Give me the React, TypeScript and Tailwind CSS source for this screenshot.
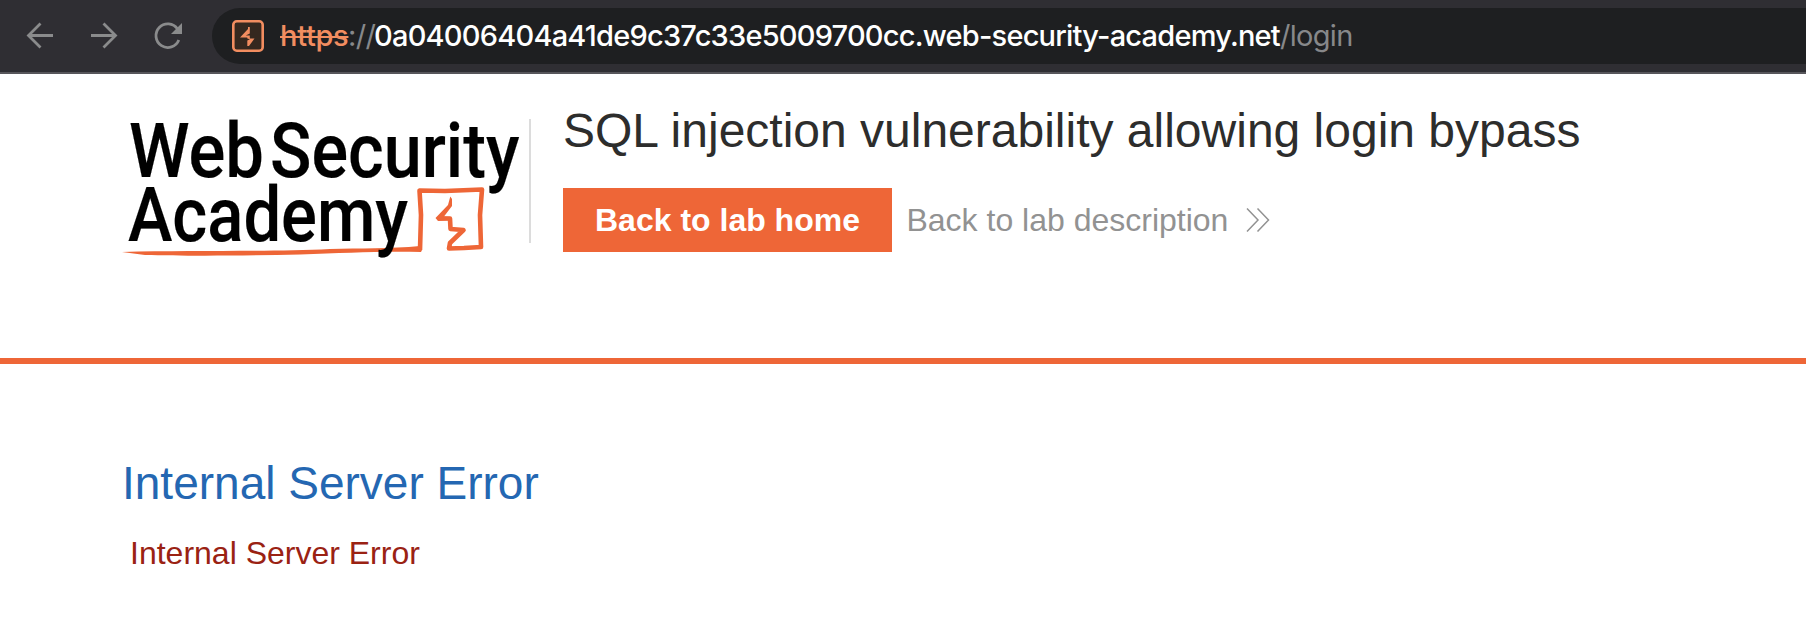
import React from "react";

function Toolbar() {
  return (
    <div className="flex h-[74px] items-start border-b-2 border-[#57565b] bg-[#2f2e33]">
      <svg className="h-[72px] w-[212px] shrink-0" viewBox="0 0 212 72" fill="none" stroke="#8a8b8c" strokeWidth="2.8">
        <path d="M53 35.5H28.5M40.5 23.5L28.5 35.5L40.5 47.5" />
        <path d="M91 35.5H115.5M103.5 23.5L115.5 35.5L103.5 47.5" />
        <path d="M177.5 29A11.8 11.8 0 1 0 178.8 40" />
        <path d="M182 23V34H171Z" fill="#8a8b8c" stroke="none" />
      </svg>
      <div className="mt-2 flex h-14 flex-1 items-center rounded-l-full bg-[#1e1f21] pl-5">
        <svg className="h-8 w-8 shrink-0" viewBox="0 0 32 32">
          <rect x="1.3" y="1.3" width="29.4" height="29.4" rx="3.5" fill="#35281f" stroke="#f28d60" strokeWidth="2.6" />
          <path d="M16 7H17.8V13.5L13.8 15.6H17.8V18.4H22.5L17 26H15.3V20.5L18 19.2L15.3 18.6V17.5H8L16 9Z" fill="#f28d60" />
        </svg>
        <div className="ml-4 flex whitespace-nowrap font-['Inter',sans-serif] text-[29px] leading-[36px]">
          <span className="w-[68px] font-medium tracking-[-0.3px] text-[#f28d60] line-through decoration-2">https</span>
          <span className="w-[26px] tracking-[-0.6px] text-[#87888a]">://</span>
          <span className="w-[906px] font-medium tracking-[-0.78px] text-white">0a04006404a41de9c37c33e5009700cc.web-security-academy.net</span>
          <span className="tracking-[-0.7px] text-[#87888a]">/login</span>
        </div>
      </div>
    </div>
  );
}

function Logo() {
  return (
    <svg className="h-[170px] w-[407px] shrink-0 overflow-visible" viewBox="122 100 407 170" fontFamily="Roboto, sans-serif" fontWeight="500" fontSize="75.5">
      <path d="M122 252C190 250 270 252 330 249C360 248 390 249 420 246L422 250L421 252C380 251 345 253 300 254.5C240 256 180 256 145 255Z" fill="#ee6637" />
      <path d="M420 250L421 215L419.5 190.5L445 191L482 189.5L480 215L481 247L464 248L449 248.5L450 243L463.5 230L450.5 229L450 218.5H439" fill="none" stroke="#ee6637" strokeWidth="4.6" strokeLinejoin="round" />
      <path d="M450.3 196.5L452 199V206L444 216.5L451 217V220L438 221L435.5 218L448 205Z" fill="#ee6637" />
      <g stroke="#000" strokeWidth="0.2">
        <text x="129" y="176.5" textLength="135" lengthAdjust="spacingAndGlyphs">Web</text>
        <text x="270" y="176.5" textLength="249.5" lengthAdjust="spacingAndGlyphs">Security</text>
        <text x="128" y="241" textLength="280" lengthAdjust="spacingAndGlyphs">Academy</text>
      </g>
    </svg>
  );
}

export default function App() {
  return (
    <div className="min-h-[620px] bg-white font-['Liberation_Sans',Arial,sans-serif]">
      <Toolbar />
      <header className="flex h-[290px] items-start border-b-[6px] border-[#ee6637] pl-[122px]">
        <div className="pt-[26px]"><Logo /></div>
        <div className="mt-[45px] h-[124px] w-[2px] bg-[#dcdcdc]" />
        <div className="ml-8 pt-[29px]">
          <h1 className="whitespace-nowrap text-[48px] leading-[56px] text-[#2d2d2c]">SQL injection vulnerability allowing login bypass</h1>
          <div className="mt-[29px] flex items-center">
            <button className="h-16 bg-[#ee6637] px-8 text-[32px] font-bold leading-[64px] whitespace-nowrap text-white">Back to lab home</button>
            <a className="ml-[14.5px] flex items-center whitespace-nowrap text-[32px] leading-[64px] text-[#929292]">
              Back to lab description
              <svg className="ml-[17.5px] h-6 w-6" viewBox="0 0 24 24" fill="none" stroke="#929292" strokeWidth="1.5">
                <path d="M1 .5L12 12L1 23.5M11.5 .5L22.5 12L11.5 23.5" />
              </svg>
            </a>
          </div>
        </div>
      </header>
      <main className="pl-[122px] pt-[91px]">
        <h2 className="text-[46px] leading-[56px] text-[#2467b2]">Internal Server Error</h2>
        <p className="pl-2 pt-[24px] text-[32px] leading-[36px] text-[#9a2213]">Internal Server Error</p>
      </main>
    </div>
  );
}
